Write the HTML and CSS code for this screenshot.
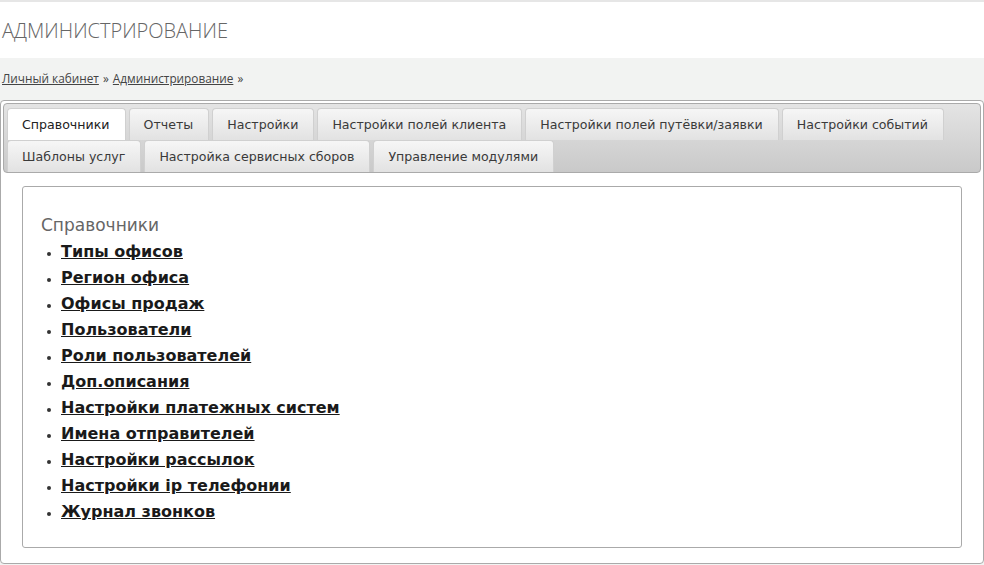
FILE: index.html
```html
<!DOCTYPE html>
<html lang="ru">
<head>
    <meta charset="UTF-8">
    <title>Администрирование</title>
    <link rel="stylesheet" href="styles.css">
</head>
<body>

<div class="topline"></div>
<div class="header">
    <h1>АДМИНИСТРИРОВАНИЕ</h1>
</div>

<div class="main">
    <div class="breadcrumbs">
        <a href="#">Личный кабинет</a> » <a href="#">Администрирование</a> »
    </div>

    <div class="panel">
        <ul class="tabs">
            <li class="active"><a href="#">Справочники</a></li>
            <li><a href="#">Отчеты</a></li>
            <li><a href="#">Настройки</a></li>
            <li><a href="#">Настройки полей клиента</a></li>
            <li><a href="#">Настройки полей путёвки/заявки</a></li>
            <li><a href="#">Настройки событий</a></li>
            <li><a href="#">Шаблоны услуг</a></li>
            <li><a href="#">Настройка сервисных сборов</a></li>
            <li><a href="#">Управление модулями</a></li>
        </ul>

        <div class="content">
            <h2>Справочники</h2>
            <ul class="links">
                <li><a href="#">Типы офисов</a></li>
                <li><a href="#">Регион офиса</a></li>
                <li><a href="#">Офисы продаж</a></li>
                <li><a href="#">Пользователи</a></li>
                <li><a href="#">Роли пользователей</a></li>
                <li><a href="#">Доп.описания</a></li>
                <li><a href="#">Настройки платежных систем</a></li>
                <li><a href="#">Имена отправителей</a></li>
                <li><a href="#">Настройки рассылок</a></li>
                <li><a href="#">Настройки ip телефонии</a></li>
                <li><a href="#">Журнал звонков</a></li>
            </ul>
        </div>
    </div>
</div>

</body>
</html>
```

FILE: styles.css
```css
body {
    margin: 0;
    font-family: 'DejaVu Sans', Verdana, sans-serif;
    color: #333;
    background: #f2f3f2;
}
.topline {
    height: 2px;
    background: #e6e6e6;
}
.header {
    background: #fff;
    height: 56px;
    display: flex;
    align-items: center;
}
h1 {
    margin: 0 0 0 2px;
    font-family: 'Open Sans', sans-serif;
    font-weight: 300;
    font-size: 20px;
    color: #666;
}
.breadcrumbs {
    font-family: 'Open Sans', sans-serif;
    font-size: 11.8px;
    color: #444;
    padding: 12px 2px 0;
    height: 30px;
    word-spacing: 1px;
}
.breadcrumbs a {
    color: #444;
    word-spacing: 0;
}
.panel {
    background: #fff;
    border: 1px solid #aaa;
    border-radius: 4px;
    padding: 2px 2px 15px;
}
.tabs {
    list-style: none;
    margin: 0;
    padding: 4px 34px 0 3px;
    display: flex;
    flex-wrap: wrap;
    gap: 0 3px;
    border: 1px solid #aaa;
    border-radius: 4px;
    background: linear-gradient(to bottom, #e4e4e4, #c9c9c9);
}
.tabs li {
    height: 32px;
    border: 1px solid #d0d0d0;
    border-bottom: none;
    border-radius: 4px 4px 0 0;
    background: linear-gradient(to bottom, #f6f6f6, #e2e2e2);
    box-sizing: border-box;
}
.tabs li.active {
    background: #fff;
}
.tabs a {
    display: block;
    padding: 0 15px 0 14px;
    line-height: 31px;
    font-size: 12.6px;
    color: #3a3a3a;
    text-decoration: none;
}
.tabs li.active a {
    color: #222;
}
.content {
    margin: 13px 19px 0;
    border: 1px solid #aaa;
    border-radius: 3px;
    padding: 28px 18px 20px;
    min-height: 312px;
}
h2 {
    margin: 0;
    font-weight: normal;
    font-size: 17px;
    color: #666;
}
.links {
    margin: 4px 0 0;
    padding-left: 20px;
}
.links li {
    line-height: 26px;
    font-size: 16px;
}
.links li::marker {
    font-size: 12px;
}
.links a {
    color: #1a1a1a;
    font-weight: bold;
}
```
